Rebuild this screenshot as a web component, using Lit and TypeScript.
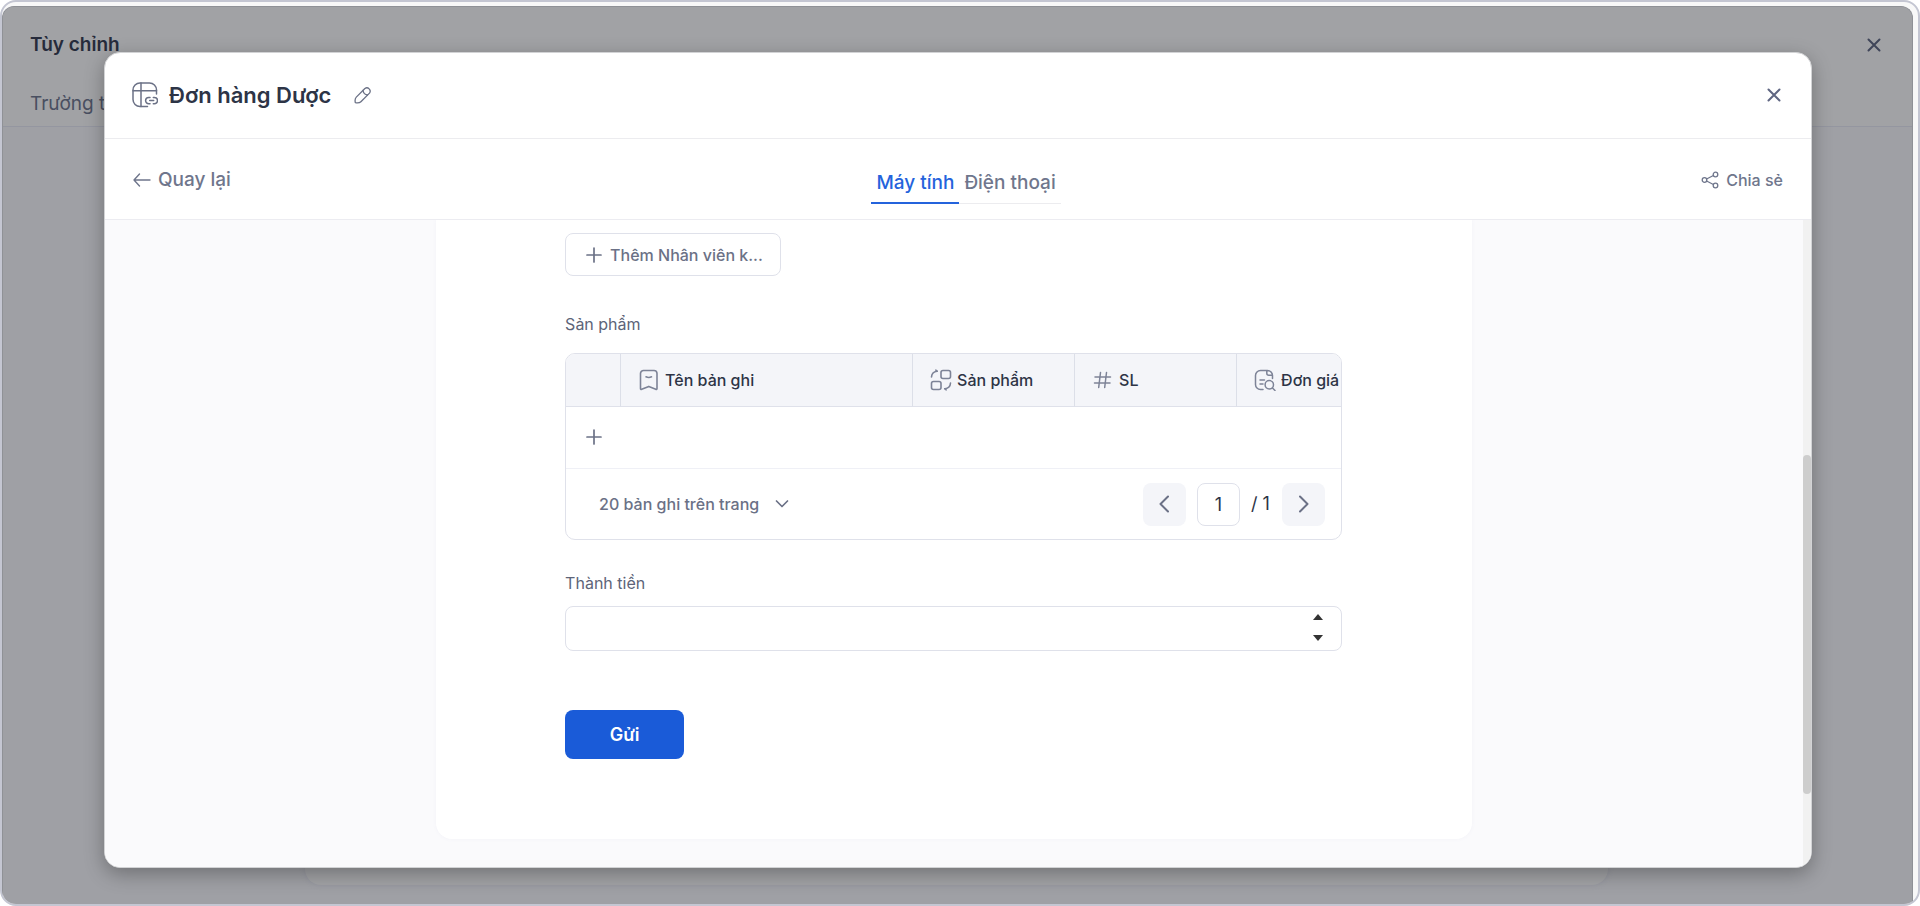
import { LitElement, html, css, svg } from "lit";
import { customElement, state } from "lit/decorators.js";

const icon = (size: number, box: number, width: number, body: unknown) => html`
  <svg width=${size} height=${size} viewBox="0 0 ${box} ${box}" fill="none" stroke="currentColor"
    stroke-width=${width} stroke-linecap="round" stroke-linejoin="round" aria-hidden="true">${body}</svg>`;

const closeIcon = icon(16, 16, 2, svg`<path d="M2.5 2.5 13.5 13.5M13.5 2.5 2.5 13.5"/>`);
const formIcon = icon(26, 26, 1.5, svg`
  <path d="M15.5 24.6H8A7 7 0 0 1 1 17.6V8A7 7 0 0 1 8 1h9.5a7 7 0 0 1 7 7v4"/>
  <path d="M1 8.7h23.500M9 1v23.600"/>
  <path d="M18 21.800h-1.200a3.200 3.200 0 0 1 0-6.400h1.200M21.300 15.400h1a3.200 3.200 0 0 1 0 6.400h-1M17.700 18.600h4"/>`);
const pencilIcon = icon(18, 18, 1.3, svg`
  <path d="M1.300 16.700c-.5-2.600-.2-4.400 1-5.600l8.600-8.600a3.300 3.300 0 0 1 4.600 4.600l-8.600 8.600c-1.200 1.200-3 1.500-5.600 1z"/>
  <path d="M9 4.500q.6 4 4.500 4.500"/>`);
const backIcon = icon(18, 18, 1.4, svg`<path d="M17 9H1M6.500 3 1 9l5.500 6"/>`);
const shareIcon = icon(18, 18, 1.3, svg`
  <circle cx="3.500" cy="9" r="2.300"/><circle cx="14.500" cy="3.500" r="2.300"/><circle cx="14.500" cy="14.500" r="2.300"/>
  <path d="M5.600 8 12.400 4.500M5.600 10l6.800 3.500"/>`);
const plusIcon = icon(16, 16, 1.7, svg`<path d="M8 1v14M1 8h14"/>`);
const recordIcon = icon(22, 22, 1.6, svg`
  <path d="M2.500 19.500V4.500a3 3 0 0 1 3-3h10.500a3 3 0 0 1 3 3v15c0 .8-.6 1.100-1.200.8L10.800 17.400l-7.100 2.900c-.7.300-1.200 0-1.200-.8z"/>
  <path d="M8 7.800q2.800 1.300 5.500 0"/>`);
const linkIcon = icon(22, 22, 1.6, svg`
  <rect x="11" y="1.500" width="9.500" height="8" rx="2"/><rect x="1.500" y="12.500" width="9.500" height="8" rx="2"/>
  <path d="M1.500 8c.2-3.300 2-5.300 5.500-5.700M5.800 1.200l1.500 1M20.500 14c-.2 3.300-2 5.300-5.500 5.700M16.200 20.800l-1.500-1"/>`);
const numberIcon = icon(22, 22, 1.5, svg`<path d="M8.500 3.500 6.700 18.500M14.500 3.500 12.700 18.500M3 8h15.500M2.500 14h15.500"/>`);
const lookupIcon = icon(22, 22, 1.5, svg`
  <path d="M9 20.500H6.500a5 5 0 0 1-5-5v-9a5 5 0 0 1 5-5h7a5 5 0 0 1 5 5v3M12.800 1.700v2.600a2 2 0 0 0 2 2h3.500"/>
  <path d="M6 11h4.500M6 15h3"/><circle cx="15.300" cy="15.800" r="4.200"/><path d="m18.500 19 2.500 2.500"/>`);
const chevronLeft = icon(18, 18, 2, svg`<path d="M12 1.500 4.500 9l7.500 7.500"/>`);
const chevronRight = icon(18, 18, 2, svg`<path d="M6 1.500 13.500 9 6 16.500"/>`);
const chevronDown = icon(14, 14, 1.7, svg`<path d="m1.500 4 5.500 5.500L12.500 4"/>`);

@customElement("app-root")
export class AppRoot extends LitElement {
  @state() private device = "desktop";

  static styles = css`
    :host {
      display: block;
      position: relative;
      height: 100vh;
      min-height: 700px;
      background: #fff;
      color: #2d3446;
      font-family: Inter, "Noto Sans", sans-serif;
      font-size: 16px;
      line-height: 24px;
    }
    * { box-sizing: border-box; }
    h1, h2 { margin: 0; font-weight: 600; }
    svg { display: block; flex: none; }
    button, input, select { font: inherit; color: inherit; margin: 0; }
    button { border: 0; background: none; padding: 0; cursor: pointer; }

    .frame {
      height: 100%;
      border: 2px solid #c4c6d2;
      border-radius: 16px;
      padding: 4px 5px 0 0;
      background: #f8f8f8;
      overflow: hidden;
    }
    .page {
      height: 100%;
      display: flex;
      flex-direction: column;
      border: 1px solid #8f9196;
      border-bottom: 0;
      border-radius: 12px 12px 0 0;
      background: #9fa0a5;
      overflow: hidden;
    }
    .page-head {
      display: flex;
      align-items: center;
      justify-content: space-between;
      padding: 26px 30px 0 27px;
      margin-right: -4px;
      background: #a1a2a5;
    }
    .page-title { font-size: 19px; line-height: 24px; color: #262b3b; }
    .page-head button { color: #3f4559; padding: 4px; }
    .page-tabs {
      padding: 35px 27px 10px;
      border-bottom: 1px solid #9496a0;
      background: #a1a2a5;
      color: #494f61;
      font-size: 19px;
    }
    .page-body { flex: 1; padding: 0 304px 19px 302px; display: flex; }
    .page-card { flex: 1; border-radius: 0 0 16px 16px; background: #a2a3a6; box-shadow: 0 0 5px #94959f; }

    .overlay {
      position: absolute;
      inset: 0;
      padding: 52px 108px 38px 104px;
      display: flex;
    }
    .modal {
      flex: 1;
      min-width: 0;
      display: flex;
      flex-direction: column;
      border: 1px solid #d2d3d5;
      border-radius: 16px;
      background: #fff;
      overflow: hidden;
      box-shadow: 0 6px 20px rgba(0, 0, 0, 0.3);
    }
    .modal-head {
      display: flex;
      align-items: center;
      height: 86px;
      padding: 0 29px 2px 27px;
      border-bottom: 1px solid #ececef;
      color: #6b7186;
    }
    .modal-head h2 { font-size: 22px; line-height: 32px; color: #2d3446; margin: 0 23px 0 11px; }
    .modal-head .close { margin-left: auto; color: #5f6682; }
    .toolbar {
      display: flex;
      justify-content: space-between;
      align-items: center;
      height: 81px;
      padding: 1px 28px 0 28px;
      border-bottom: 1px solid #ececf1;
      color: #6f768c;
      font-weight: 500;
    }
    .back { display: flex; align-items: center; gap: 7px; font-size: 19px; }
    .share { display: flex; align-items: center; gap: 7px; }
    .tabs { display: flex; border-bottom: 1px solid #ececef; margin-top: 11px; }
    .tab { font-size: 19px; padding: 4px 5px 7px; border-bottom: 2px solid transparent; margin-bottom: -1px; font-weight: 500; }
    .tab.on { color: #2463dc; border-color: #2463dc; }

    .modal-body { flex: 1; min-height: 0; display: flex; background: #fafafc; }
    .viewport { flex: 1; min-width: 0; overflow: hidden; }
    .rail { width: 8px; background: #f1f1f1; display: flex; flex-direction: column; }
    .before { flex: 235; }
    .thumb { flex: 340; border-radius: 4px; background: #cdcdcd; }
    .after { flex: 73; }

    .card {
      width: 61%;
      margin: 0 auto;
      padding: 13px 130px 80px 129px;
      background: #fff;
      border-radius: 0 0 16px 16px;
      box-shadow: 0 0 4px #f3f3f8;
    }
    .add {
      display: flex;
      align-items: center;
      gap: 8px;
      width: 216px;
      height: 43px;
      padding: 0 14px 0 20px;
      border: 1px solid #dfe1ea;
      border-radius: 8px;
      color: #6b7186;
      font-weight: 500;
    }
    .add span { overflow: hidden; text-overflow: ellipsis; white-space: nowrap; }
    .label { display: block; color: #5d6478; }
    .products { margin: 36px 0 17px; }
    .grid {
      border: 1px solid #dfe1ea;
      border-radius: 10px;
      overflow: hidden;
    }
    table { table-layout: fixed; border-collapse: separate; border-spacing: 0; width: 833px; }
    .c0 { width: 55px; }
    .c1 { width: 292px; }
    .c2 { width: 162px; }
    th {
      height: 53px;
      padding: 0 0 0 17px;
      background: #f4f5f9;
      border-bottom: 1px solid #dfe1ea;
      border-right: 1px solid #dcdfe8;
      font-weight: 500;
      text-align: left;
    }
    .head { display: flex; align-items: center; gap: 5px; white-space: nowrap; }
    .head svg { color: #7d8397; }
    td { height: 62px; padding: 0 0 2px 20px; border-bottom: 1px solid #eff0f6; }
    td button { display: block; color: #6b7186; }
    .foot {
      display: flex;
      align-items: center;
      justify-content: space-between;
      height: 70px;
      padding: 0 16px 0 33px;
    }
    .size { display: flex; align-items: center; gap: 15px; color: #6b7186; font-weight: 500; }
    .size select { appearance: none; border: 0; background: none; padding: 0; font-size: 16px; }
    .pager { display: flex; align-items: center; font-size: 18px; }
    .step { width: 43px; height: 43px; display: grid; place-items: center; border-radius: 8px; background: #f4f5f9; color: #6b7186; }
    .pager input {
      width: 43px;
      height: 43px;
      margin: 0 11px;
      padding: 0;
      border: 1px solid #dfe1ea;
      border-radius: 8px;
      text-align: center;
      background: #fff;
    }
    .pager span { margin-right: 12px; }

    .total { margin: 31px 0 11px; }
    .amount { display: flex; height: 45px; border: 1px solid #dfe1ea; border-radius: 8px; background: #fff; padding: 0 13px 2px 0; }
    .amount input { flex: 1; min-width: 0; border: 0; background: none; padding: 0 16px; outline: 0; appearance: textfield; }
    .amount input::-webkit-inner-spin-button { appearance: none; }
    .spin { display: flex; flex-direction: column; width: 20px; }
    .spin button { flex: 1; display: grid; place-items: center; color: #333; }
    .send {
      width: 119px;
      height: 49px;
      margin-top: 59px;
      display: block;
      border-radius: 8px;
      background: #1a5bd8;
      color: #fff;
      font-size: 18px;
      font-weight: 600;
    }
  `;

  private tab(id: string, label: string) {
    const on = this.device === id;
    return html`<button role="tab" class="tab ${on ? "on" : ""}" aria-selected=${on}
      @click=${() => (this.device = id)}>${label}</button>`;
  }

  private column(glyph: unknown, label: string) {
    return html`<th scope="col"><div class="head">${glyph}<span>${label}</span></div></th>`;
  }

  private triangle(d: string) {
    return html`<svg width="10" height="6" viewBox="0 0 10 6" fill="currentColor" aria-hidden="true"><path d=${d} /></svg>`;
  }

  render() {
    return html`
      <div class="frame">
        <div class="page">
          <div class="page-head">
            <h1 class="page-title">Tùy chỉnh</h1>
            <button>${closeIcon}</button>
          </div>
          <div class="page-tabs">Trường t</div>
          <div class="page-body"><div class="page-card"></div></div>
        </div>
      </div>
      <div class="overlay">
        <section class="modal" role="dialog" aria-labelledby="title">
          <header class="modal-head">
            ${formIcon}
            <h2 id="title">Đơn hàng Dược</h2>
            <button>${pencilIcon}</button>
            <button class="close">${closeIcon}</button>
          </header>
          <nav class="toolbar">
            <button class="back">${backIcon}Quay lại</button>
            <div class="tabs" role="tablist">
              ${this.tab("desktop", "Máy tính")}${this.tab("phone", "Điện thoại")}
            </div>
            <button class="share">${shareIcon}Chia sẻ</button>
          </nav>
          <div class="modal-body">
            <div class="viewport">
              <div class="card">
                <form @submit=${(e: Event) => e.preventDefault()}>
                  <button type="button" class="add">${plusIcon}<span>Thêm Nhân viên k...</span></button>
                  <div class="label products" id="products">Sản phẩm</div>
                  <div class="grid">
                    <table aria-labelledby="products">
                      <colgroup>
                        <col class="c0" /><col class="c1" /><col class="c2" /><col class="c2" /><col class="c2" />
                      </colgroup>
                      <thead>
                        <tr>
                          <th></th>
                          ${this.column(recordIcon, "Tên bản ghi")}
                          ${this.column(linkIcon, "Sản phẩm")}
                          ${this.column(numberIcon, "SL")}
                          ${this.column(lookupIcon, "Đơn giá")}
                        </tr>
                      </thead>
                      <tbody>
                        <tr><td colspan="5"><button type="button">${plusIcon}</button></td></tr>
                      </tbody>
                    </table>
                    <div class="foot">
                      <label class="size">
                        <select><option>20 bản ghi trên trang</option></select>${chevronDown}
                      </label>
                      <div class="pager">
                        <button type="button" class="step">${chevronLeft}</button>
                        <input id="page" value="1" aria-labelledby="pages" />
                        <span id="pages">/ 1</span>
                        <button type="button" class="step">${chevronRight}</button>
                      </div>
                    </div>
                  </div>
                  <label class="label total" for="amount">Thành tiền</label>
                  <div class="amount">
                    <input id="amount" type="number" />
                    <div class="spin">
                      <button type="button">${this.triangle("M0 6 5 0l5 6z")}</button>
                      <button type="button">${this.triangle("M0 0h10L5 6z")}</button>
                    </div>
                  </div>
                  <button class="send">Gửi</button>
                </form>
              </div>
            </div>
            <div class="rail"><div class="before"></div><div class="thumb"></div><div class="after"></div></div>
          </div>
        </section>
      </div>
    `;
  }
}
